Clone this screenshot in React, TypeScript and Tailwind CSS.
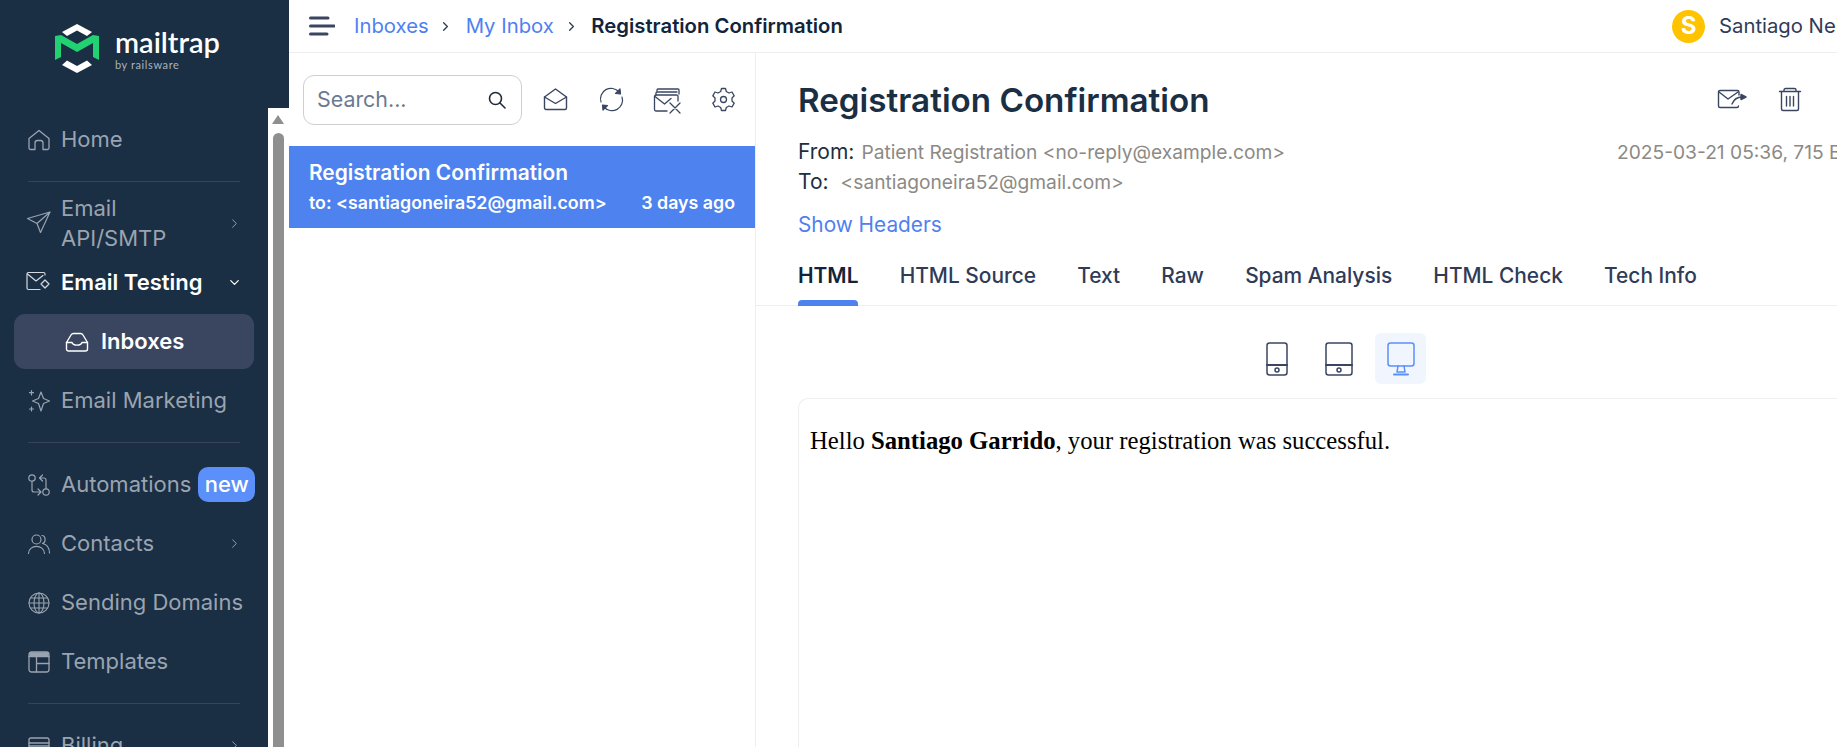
import React from "react";
import { ChevronRight, ChevronDown } from "lucide-react";

const Icon = ({ size = 24, w, h, sw = 1.4, children }: { size?: number; w?: number; h?: number; sw?: number; children: React.ReactNode }) => (
  <svg width={w ?? size} height={h ?? size} viewBox={`0 0 ${w ?? size} ${h ?? size}`} fill="none" stroke="currentColor" strokeWidth={sw} strokeLinecap="round" strokeLinejoin="round" className="shrink-0">
    {children}
  </svg>
);

const NavRow = ({ icon, label, chevron }: { icon: React.ReactNode; label: string; chevron?: boolean }) => (
  <div className="h-[59px] flex items-center pl-[27px] pr-[26px] text-[22px] text-[#9aa4b0]">
    <div className="w-[34px] shrink-0 flex">{icon}</div>
    <div className="flex-1 whitespace-nowrap">{label}</div>
    {chevron && <ChevronRight size={15} strokeWidth={1.5} />}
  </div>
);

const Divider = () => <div className="mx-[28px] mt-[12px] h-px bg-[#37435d]" />;

const Logo = () => (
  <div className="h-[108px] flex pl-[54px] pt-[24px] bg-[#1a2e44]">
    <svg width="46" height="50" viewBox="0 0 46 50" className="shrink-0">
      <path d="M23 0 L38 8 L33 12 L23 6.500 L13 12 L8 8 Z" fill="#fff" />
      <path d="M23 49 L38 41 L33 36.500 L23 42 L13 36.500 L8 41 Z" fill="#fff" />
      <path d="M1 12 L7 11 L23 20 L39 11 L45 12 L45 36 L39 33 L39 19 L23 28 L7 19 L7 33 L1 36 Z" fill="#22d172" />
    </svg>
    <div className="ml-[15px] mt-[2px] text-white">
      <div className="font-['Lato',sans-serif] text-[29px] leading-[32px] font-semibold">mailtrap</div>
      <div className="font-['Lato',sans-serif] text-[11px] leading-[14px] text-[#aab2bd] tracking-[0.6px]">by railsware</div>
    </div>
  </div>
);

const Sidebar = () => (
  <div className="w-[289px] h-full shrink-0 flex flex-col overflow-hidden bg-white">
    <Logo />
    <div className="flex-1 min-h-0 flex">
      <nav className="w-[268px] bg-[#1a2e44] pt-[2px] overflow-hidden">
        <NavRow
          label="Home"
          icon={
            <Icon sw={1.3}>
              <path d="M2 10.500 L12 2.500 L22 10.500 V20 a1.500 1.500 0 0 1 -1.500 1.500 H16 V15 a2.500 2.500 0 0 0 -2.500 -2.500 h-3 a2.500 2.500 0 0 0 -2.500 2.500 V21.500 H3.500 A1.500 1.500 0 0 1 2 20 Z" />
            </Icon>
          }
        />
        <Divider />
        <div className="mt-[11px] h-[60px] flex items-center pl-[27px] pr-[26px] text-[22px] leading-[30px] text-[#9aa4b0]">
          <div className="w-[34px] shrink-0 flex">
            <Icon sw={1.2}>
              <path d="M0.500 7.500 L23 1 L13.500 21.500 L10 12.500 Z M10 12.500 L23 1" />
            </Icon>
          </div>
          <div className="flex-1">
            Email
            <br />
            API/SMTP
          </div>
          <ChevronRight size={15} strokeWidth={1.5} />
        </div>
        <div className="mt-[9px] h-[40px] flex items-center pl-[25px] pr-[26px] text-[22px] font-semibold text-white">
          <div className="w-[36px] shrink-0 flex text-[#d6dae0]">
            <Icon size={26} sw={1.2}>
              <path d="M20 6 V5 a1.500 1.500 0 0 0 -1.500 -1.500 H3.500 A1.500 1.500 0 0 0 2 5 V19 a1.500 1.500 0 0 0 1.500 1.500 H15" />
              <path d="M2.500 5 L11 12 L18 6.500" />
              <path d="M20 11 L24 15 L20 19 L16 15 Z" />
            </Icon>
          </div>
          <div className="flex-1 whitespace-nowrap">Email Testing</div>
          <ChevronDown size={15} strokeWidth={2} />
        </div>
        <div className="mx-[14px] mt-[12px] h-[55px] rounded-[11px] bg-[#3a4560] flex items-center pl-[51px] text-[22px] font-semibold text-white">
          <div className="w-[36px] shrink-0 flex">
            <Icon>
              <path d="M1.500 12.500 L6 5 a3 3 0 0 1 2.500 -1.500 h7 a3 3 0 0 1 2.500 1.500 L22.500 12.500 V19 a2 2 0 0 1 -2 2 H3.500 a2 2 0 0 1 -2 -2 Z" />
              <path d="M1.500 12.500 H7 C8 16 16 16 17 12.500 H22.500" />
            </Icon>
          </div>
          Inboxes
        </div>
        <div className="mt-[2px]" />
        <NavRow
          label="Email Marketing"
          icon={
            <Icon sw={1.2}>
              <path d="M14 3 L16.500 9.500 L22.500 12 L16.500 14.500 L14 22 L11.500 14.500 L5.500 12 L11.500 9.500 Z" />
              <path d="M4.500 1.500 V6 M2.500 3.700 H6.500 M4.500 18 V22 M2.500 20 H6.500" />
            </Icon>
          }
        />
        <Divider />
        <div className="mt-[12px] h-[59px] flex items-center pl-[27px] text-[22px] text-[#9aa4b0]">
          <div className="w-[34px] shrink-0 flex">
            <Icon sw={1.2}>
              <circle cx="5" cy="5" r="3.200" />
              <circle cx="19" cy="19" r="3.200" />
              <path d="M5 8.500 V17 a2 2 0 0 0 2 2 H14 M11 16 L14 19 L11 22 M19 15.500 V7 a2 2 0 0 0 -2 -2 H13 M15.500 2 L12.500 5 L15.500 8" />
            </Icon>
          </div>
          <div className="whitespace-nowrap">Automations</div>
          <div className="ml-[7px] w-[57px] h-[35px] rounded-[10px] bg-[#5b8ffa] text-white font-medium flex items-center justify-center">new</div>
        </div>
        <NavRow
          chevron
          label="Contacts"
          icon={
            <Icon sw={1.2}>
              <circle cx="9.500" cy="7.500" r="4.500" />
              <path d="M1.500 21.500 C2 12 17 12 17.500 21.500 M15 3.500 C18.500 3.500 19.500 10 15.500 11.500 C20 12.500 22.500 16 22.500 21" />
            </Icon>
          }
        />
        <NavRow
          label="Sending Domains"
          icon={
            <Icon sw={1.1}>
              <circle cx="12" cy="12" r="10" />
              <ellipse cx="12" cy="12" rx="5" ry="10" />
              <path d="M12 2 V22 M2 12 H22 M3.500 7 H20.500 M3.500 17 H20.500" />
            </Icon>
          }
        />
        <NavRow
          label="Templates"
          icon={
            <Icon sw={1.3}>
              <rect x="2" y="2" width="20" height="20" rx="2.500" />
              <path d="M2 6.500 H22 M9.500 6.500 V22 M9.500 13.500 H22" />
              <path d="M3 3 H21 V6 H3 Z" fill="currentColor" />
            </Icon>
          }
        />
        <Divider />
        <div className="mt-[12px]" />
        <NavRow
          chevron
          label="Billing"
          icon={
            <Icon sw={1.3}>
              <rect x="2" y="4" width="20" height="16" rx="2" />
              <path d="M2 9 H22 M2 12 H22" />
            </Icon>
          }
        />
      </nav>
      {/* browser scrollbar of the nav */}
      <div className="w-[21px] shrink-0 pl-[4px] pt-[7px] bg-white">
        <div className="w-0 h-0 border-x-[6.500px] border-x-transparent border-b-[9px] border-b-[#8f8f8f]" />
        <div className="ml-px mt-[9px] w-[11px] h-[700px] rounded-t-[6px] bg-[#8f8f8f]" />
      </div>
    </div>
  </div>
);

const TopBar = () => (
  <header className="h-[53px] shrink-0 border-b border-[#eeeeee] flex items-center pl-[20px] text-[20.3px] bg-white">
    <svg width="26" height="20" viewBox="0 0 26 20" fill="none" stroke="#3a4560" strokeWidth="3" strokeLinecap="round" className="shrink-0">
      <path d="M1.500 2 H19 M1.500 10 H25 M1.500 18 H18" />
    </svg>
    <a className="ml-[19px] text-[#4f80f0]">Inboxes</a>
    <ChevronRight size={15} className="ml-[9px] text-[#2c3a52]" />
    <a className="ml-[13px] text-[#4f80f0]">My Inbox</a>
    <ChevronRight size={15} className="ml-[10px] text-[#2c3a52]" />
    <span className="ml-[12.5px] font-semibold text-[#13243a] whitespace-nowrap">Registration Confirmation</span>
    <div className="ml-auto flex items-center">
      <div className="w-[33px] h-[33px] rounded-full bg-[#ffc300] text-white font-bold text-[24px] flex items-center justify-center">S</div>
      <span className="ml-[14px] w-[170px] text-[#2f3b57] whitespace-nowrap">Santiago Neira</span>
    </div>
  </header>
);

const ToolIcon = ({ children }: { children: React.ReactNode }) => <div className="w-[56px] text-[#3a4560] flex justify-center">{children}</div>;

const InboxList = () => (
  <div className="w-[467px] shrink-0 border-r border-[#eeeeee]">
    <div className="h-[93px] flex items-center pl-[14px]">
      <div className="w-[219px] h-[50px] rounded-[11px] border border-[#cfcfcf] flex items-center pl-[13px] pr-[14px]">
        <span className="flex-1 text-[21.4px] text-[#6b7a90]">Search...</span>
        <svg width="20" height="20" viewBox="0 0 20 20" fill="none" stroke="#1f2a3a" strokeWidth="1.600" strokeLinecap="round">
          <circle cx="8.500" cy="8.500" r="6" />
          <path d="M13 13 L18 18" />
        </svg>
      </div>
      <div className="ml-[5px] flex items-center">
        <ToolIcon>
          <Icon size={25}>
            <path d="M1.500 10 L12.500 2 L23.500 10 V21 a1.500 1.500 0 0 1 -1.500 1.500 H3 a1.500 1.500 0 0 1 -1.500 -1.500 Z" />
            <path d="M1.500 10 L12.500 16.500 L23.500 10" />
          </Icon>
        </ToolIcon>
        <ToolIcon>
          <Icon size={25} sw={1.2}>
            <path d="M2 15 A10.500 10.500 0 0 1 20 5 M23 10 A10.500 10.500 0 0 1 5 20" />
            <path d="M21 2 L21.500 7 L16.500 6.500 Z" fill="currentColor" />
            <path d="M4 23 L3.500 18 L8.500 18.500 Z" fill="currentColor" />
          </Icon>
        </ToolIcon>
        <ToolIcon>
          <Icon size={28} sw={1.3}>
            <path d="M4 6 V4 a1 1 0 0 1 1 -1 H25 a1 1 0 0 1 1 1 V8 M3 9 V7 a1 1 0 0 1 1 -1 H24" />
            <path d="M14 25 H3 a1.500 1.500 0 0 1 -1.500 -1.500 V10.500 A1.500 1.500 0 0 1 3 9 H24 a1.500 1.500 0 0 1 1 1 V15" />
            <path d="M2 10.500 L11.500 18 L18 12.500 M17 17 L27 27 M27 17 L17 27" />
          </Icon>
        </ToolIcon>
        <ToolIcon>
          <Icon size={25} sw={1.3}>
            <circle cx="12.500" cy="12.500" r="3" />
            <path d="M10.500 1.500 H14.500 L15.300 4.500 L18 6 L21 5 L23.200 8.800 L21 11 V14 L23.200 16.200 L21 20 L18 19 L15.300 20.500 L14.500 23.500 H10.500 L9.700 20.500 L7 19 L4 20 L1.800 16.200 L4 14 V11 L1.800 8.800 L4 5 L7 6 L9.700 4.500 Z" />
          </Icon>
        </ToolIcon>
      </div>
    </div>
    <div className="h-[82px] bg-[#4e82ee] text-white pl-[20px] pr-[20px] pt-[12px]">
      <div className="text-[20.9px] leading-[30px] font-semibold whitespace-nowrap">Registration Confirmation</div>
      <div className="mt-[2px] flex justify-between text-[17.8px] leading-[26px] font-semibold whitespace-nowrap">
        <span>to: &lt;santiagoneira52@gmail.com&gt;</span>
        <span>3 days ago</span>
      </div>
    </div>
  </div>
);

const tabs = ["HTML", "HTML Source", "Text", "Raw", "Spam Analysis", "HTML Check", "Tech Info"];

const DeviceIcon = ({ children, active }: { children: React.ReactNode; active?: boolean }) => (
  <div className={active ? "w-[51px] h-[51px] rounded-[6px] bg-[#f1f5fe] text-[#5b8ffa] flex items-center justify-center" : "w-[51px] h-[51px] text-[#3a4560] flex items-center justify-center"}>
    {children}
  </div>
);

const Detail = () => (
  <div className="flex-1 min-w-0 flex flex-col">
    <div className="pl-[42px] border-b border-[#eeeeee]">
      <div className="pt-[22px] h-[72px] flex items-center justify-between pr-[87px]">
        <h1 className="text-[33.2px] leading-[40px] font-semibold text-[#1a2e44] whitespace-nowrap">Registration Confirmation</h1>
        <div className="flex items-center gap-[31px] text-[#3a4560] -mt-[2px]">
          <Icon w={30} h={24}>
            <path d="M22 8 V5 a1.500 1.500 0 0 0 -1.500 -1.500 H3 A1.500 1.500 0 0 0 1.500 5 V19 A1.500 1.500 0 0 0 3 20.500 H20 a1.500 1.500 0 0 0 1.500 -1.500" />
            <path d="M2 5 L11 12 L21 5 M15 17 C17 12 20 10 25 10" />
            <path d="M24 7.500 L29 10 L24 12.500 Z" fill="currentColor" />
          </Icon>
          <Icon w={24} h={25}>
            <path d="M1.500 4.500 H22.500 M6 4.500 V3 a1.500 1.500 0 0 1 1.500 -1.500 H16.500 A1.500 1.500 0 0 1 18 3 V4.500" />
            <path d="M3.500 4.500 V22 a1.500 1.500 0 0 0 1.500 1.500 H19 a1.500 1.500 0 0 0 1.500 -1.500 V4.500" />
            <path d="M8.500 9.500 V19 M12 9.500 V19 M15.500 9.500 V19" />
          </Icon>
        </div>
      </div>
      <div className="mt-[12px] flex justify-between text-[19.2px] leading-[30px] text-[#8c8a85]">
        <div>
          <div className="whitespace-nowrap">
            <span className="text-[21px] text-[#1a2e44] mr-[7px]">From:</span>Patient Registration &lt;no-reply@example.com&gt;
          </div>
          <div className="whitespace-nowrap">
            <span className="text-[21px] text-[#1a2e44] mr-[12px]">To:</span>&lt;santiagoneira52@gmail.com&gt;
          </div>
        </div>
        <div className="w-[272px] shrink-0 whitespace-nowrap">2025-03-21 05:36, 715 Bytes</div>
      </div>
      <div className="mt-[13px] text-[20.8px] leading-[30px] text-[#4f80f0]">Show Headers</div>
      <div className="mt-[21px] flex gap-[41.2px] text-[20.9px] leading-[30px] font-medium text-[#2f3b57]">
        {tabs.map((tab, i) => (
          <div key={tab} className={i === 0 ? "relative h-[44px] text-[#13243a] font-semibold" : "h-[44px]"}>
            {tab}
            {i === 0 && <div className="absolute left-0 right-0 bottom-[-1px] h-[6px] rounded-t-[4px] bg-[#4e82ee]" />}
          </div>
        ))}
      </div>
    </div>
    <div className="pl-[42px] pr-[10px] flex-1 min-h-0 flex flex-col">
      <div className="mt-[27px] flex justify-center gap-[11px]">
        <DeviceIcon>
          <Icon w={22} h={34} sw={1.5}>
            <rect x="1" y="1" width="20" height="32" rx="2.500" />
            <path d="M1 23 H21" strokeWidth="2" />
            <circle cx="11" cy="28" r="2" />
          </Icon>
        </DeviceIcon>
        <DeviceIcon>
          <Icon w={28} h={34} sw={1.5}>
            <rect x="1" y="1" width="26" height="32" rx="2.500" />
            <path d="M1 23 H27" strokeWidth="2" />
            <circle cx="14" cy="28" r="2" />
          </Icon>
        </DeviceIcon>
        <DeviceIcon active>
          <Icon w={28} h={34} sw={1.5}>
            <rect x="1" y="1" width="26" height="23" rx="2.500" />
            <path d="M11 24 L10 30 H18 L17 24" />
            <path d="M7 32.500 H21" strokeWidth="2" />
          </Icon>
        </DeviceIcon>
      </div>
      <div className="mt-[14px] flex-1 rounded-t-[10px] border border-b-0 border-[#eeeeee] pl-[11px] pt-[27px]">
        <p className="font-['Liberation_Serif',serif] text-[24.7px] leading-[30px] text-black whitespace-nowrap">
          Hello <b>Santiago Garrido</b>, your registration was successful.
        </p>
      </div>
    </div>
  </div>
);

export default function App() {
  return (
    <div className="w-screen h-screen overflow-hidden flex bg-white font-['Inter',sans-serif]">
      <Sidebar />
      <main className="w-[1600px] shrink-0 flex flex-col">
        <TopBar />
        <div className="flex-1 min-h-0 flex">
          <InboxList />
          <Detail />
        </div>
      </main>
    </div>
  );
}
